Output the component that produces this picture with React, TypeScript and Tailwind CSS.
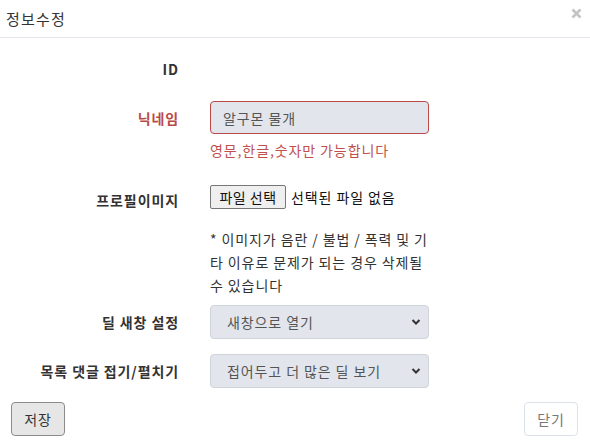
import React from 'react';

const font = { fontFamily: '"Noto Sans CJK KR", "Noto Sans", sans-serif' };

// small chevron used on the two selects
const Chevron = () => (
  <svg width="10" height="8" viewBox="0 0 10 8" className="pointer-events-none absolute right-[8px] top-1/2 -translate-y-1/2">
    <path d="M1.5 2 L5 5.5 L8.5 2" fill="none" stroke="#333" strokeWidth="2" />
  </svg>
);

export default function App() {
  return (
    <div className="w-[590px] h-[447px] bg-white text-[14px] tracking-[0.9px] text-[#333]" style={font}>
      {/* header */}
      <div className="relative h-[38px] border-b border-[#e3e6ec] flex items-center px-[6px]">
        <h4 className="text-[15px] tracking-[1.2px] leading-none text-[#333]">정보수정</h4>
        <svg width="11" height="11" viewBox="0 0 11 11" className="absolute right-[8px] top-[8px]">
          <path d="M1.5 1.5 L9.5 9.5 M9.5 1.5 L1.5 9.5" stroke="#c4c4c4" strokeWidth="2.6" />
        </svg>
      </div>

      {/* body */}
      <div className="pt-[21px]">
        <div className="flex items-center h-[20px]">
          <label className="w-[180px] pr-[1px] text-right font-bold">ID</label>
        </div>

        <div className="flex items-start mt-[22px]">
          <label className="w-[180px] pr-[1px] text-right font-bold text-[#b94a48] pt-[7px]">닉네임</label>
          <div className="ml-[30px] w-[219px]">
            <input
              value="알구몬 물개"
              readOnly
              className="w-full h-[33px] rounded-[4px] border border-[#b94a48] bg-[#e2e5ec] px-[12px] text-[#555] outline-none"
            />
            <p className="mt-[6px] leading-[20px] text-[#c0504d]">영문,한글,숫자만 가능합니다</p>
          </div>
        </div>

        <div className="flex items-start mt-[25px]">
          <label className="w-[180px] pr-[1px] text-right font-bold pt-[5px]">프로필이미지</label>
          <div className="ml-[30px] w-[219px]">
            <div className="flex items-center h-[24px]">
              <button className="h-[24px] w-[76px] rounded-[2px] border border-[#767676] bg-[#efefef] text-[14px] tracking-[0.5px] text-[#111] leading-none">파일 선택</button>
              <span className="ml-[5px] text-[#111]">선택된 파일 없음</span>
            </div>
            <p className="mt-[19px] leading-[23px] text-[#333]">* 이미지가 음란 / 불법 / 폭력 및 기타 이유로 문제가 되는 경우 삭제될 수 있습니다</p>
          </div>
        </div>

        <div className="flex items-center mt-[8px]">
          <label className="w-[180px] pr-[1px] text-right font-bold">딜 새창 설정</label>
          <div className="relative ml-[30px] w-[219px]">
            <select className="w-full h-[34px] appearance-none rounded-[4px] border border-[#cfd3da] bg-[#e2e5ec] pl-[16px] text-[#555] outline-none">
              <option>새창으로 열기</option>
            </select>
            <Chevron />
          </div>
        </div>

        <div className="flex items-center mt-[15px]">
          <label className="w-[180px] pr-[1px] text-right font-bold">목록 댓글 접기/펼치기</label>
          <div className="relative ml-[30px] w-[219px]">
            <select className="w-full h-[34px] appearance-none rounded-[4px] border border-[#cfd3da] bg-[#e2e5ec] pl-[16px] text-[#555] outline-none">
              <option>접어두고 더 많은 딜 보기</option>
            </select>
            <Chevron />
          </div>
        </div>
      </div>

      {/* footer */}
      <div className="flex justify-between px-[11px] pr-[12px] mt-[14px]">
        <button className="h-[34px] w-[54px] rounded-[4px] border border-[#8c8c8c] bg-[#e6e6e6] text-[#333]">저장</button>
        <button className="h-[34px] w-[54px] rounded-[4px] border border-[#dde2ea] bg-white text-[#777]">닫기</button>
      </div>
    </div>
  );
}
